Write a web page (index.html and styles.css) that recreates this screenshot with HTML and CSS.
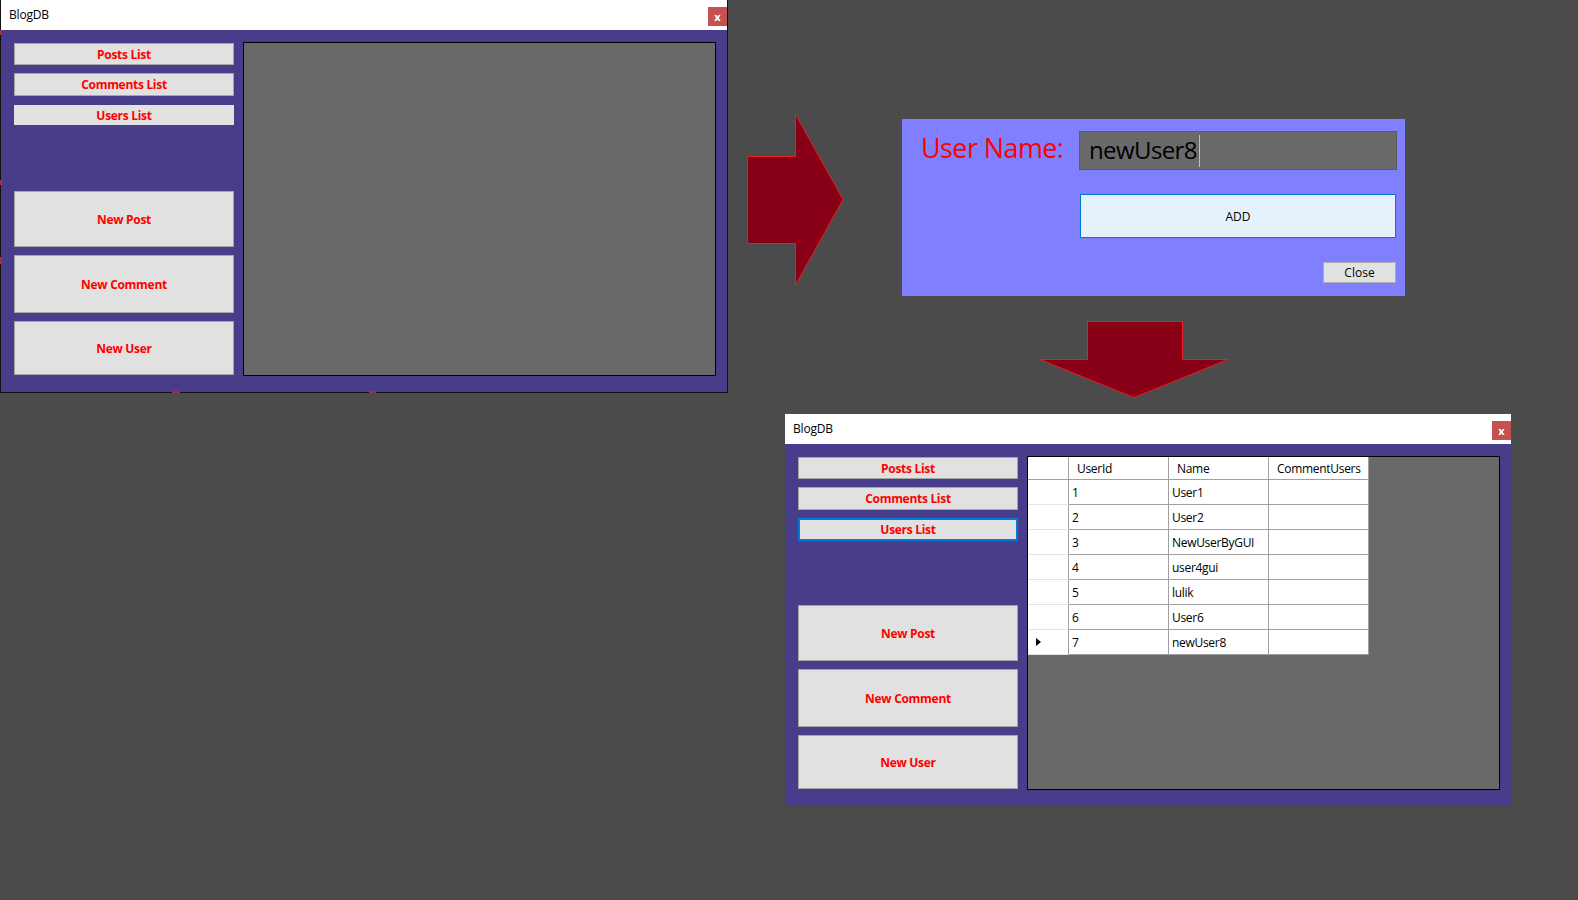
FILE: index.html
```html
<!DOCTYPE html>
<html lang="en">
<head>
    <meta charset="UTF-8">
    <meta name="viewport" content="width=device-width, initial-scale=1.0">
    <title>BlogDB</title>
    <link rel="stylesheet" href="styles.css">
</head>
<body>
<div class="desktop">

    <!-- main form, empty view -->
    <section class="window window-first">
        <header class="titlebar">
            <span class="title">BlogDB</span>
            <button class="close" type="button">x</button>
        </header>
        <div class="window-body">
            <nav class="menu">
                <button class="btn btn-list" type="button">Posts List</button>
                <button class="btn btn-list" type="button">Comments List</button>
                <button class="btn btn-list btn-flat" type="button">Users List</button>
                <button class="btn btn-post" type="button">New Post</button>
                <button class="btn btn-comment" type="button">New Comment</button>
                <button class="btn btn-user" type="button">New User</button>
            </nav>
            <div class="view"></div>
        </div>
        <span class="grip grip-l1"></span>
        <span class="grip grip-l2"></span>
        <span class="grip grip-l3"></span>
        <span class="grip grip-b1"></span>
        <span class="grip grip-b2"></span>
    </section>

    <svg class="arrow arrow-right" width="99" height="174" viewBox="0 0 99 174">
        <polygon points="1.5,43.5 49.5,43.5 49.5,1.5 97,86.5 49.5,172 49.5,130.5 1.5,130.5"/>
    </svg>

    <!-- add user dialog -->
    <form class="dialog">
        <label class="dialog-label" for="userName">User Name:</label>
        <div class="textbox" id="userName">newUser8<span class="caret"></span></div>
        <button class="btn-add" type="button">ADD</button>
        <button class="btn-close" type="button">Close</button>
    </form>

    <svg class="arrow arrow-down" width="191" height="79" viewBox="0 0 191 79">
        <polygon points="48.5,1.5 143.5,1.5 143.5,39.5 189,39.5 95,77.5 1,39.5 48.5,39.5"/>
    </svg>

    <!-- main form, users list loaded -->
    <section class="window window-second">
        <header class="titlebar">
            <span class="title">BlogDB</span>
            <button class="close" type="button">x</button>
        </header>
        <div class="window-body">
            <nav class="menu">
                <button class="btn btn-list" type="button">Posts List</button>
                <button class="btn btn-list" type="button">Comments List</button>
                <button class="btn btn-list btn-focus" type="button">Users List</button>
                <button class="btn btn-post" type="button">New Post</button>
                <button class="btn btn-comment" type="button">New Comment</button>
                <button class="btn btn-user" type="button">New User</button>
            </nav>
            <div class="view">
                <table class="grid">
                    <colgroup>
                        <col class="col-head">
                        <col class="col-data">
                        <col class="col-data">
                        <col class="col-data">
                    </colgroup>
                    <thead>
                        <tr>
                            <th class="row-head"></th>
                            <th>UserId</th>
                            <th>Name</th>
                            <th>CommentUsers</th>
                        </tr>
                    </thead>
                    <tbody>
                        <tr><td class="row-head"></td><td>1</td><td>User1</td><td></td></tr>
                        <tr><td class="row-head"></td><td>2</td><td>User2</td><td></td></tr>
                        <tr><td class="row-head"></td><td>3</td><td>NewUserByGUI</td><td></td></tr>
                        <tr><td class="row-head"></td><td>4</td><td>user4gui</td><td></td></tr>
                        <tr><td class="row-head"></td><td>5</td><td>lulik</td><td></td></tr>
                        <tr><td class="row-head"></td><td>6</td><td>User6</td><td></td></tr>
                        <tr><td class="row-head"><span class="pointer"></span></td><td>7</td><td>newUser8</td><td></td></tr>
                    </tbody>
                </table>
            </div>
        </div>
    </section>

</div>
</body>
</html>
```

FILE: styles.css
```css
body {
    margin: 0;
    background: #4b4b4b;
    font-family: "Open Sans", "Liberation Sans", sans-serif;
    color: #000;
}
.desktop {
    position: relative;
    width: 1578px;
    height: 900px;
    overflow: hidden;
}
button {
    font-family: inherit;
    padding: 0;
    cursor: pointer;
}

/* windows */
.window {
    position: absolute;
    width: 726px;
    background: #483d8b;
}
.window-first {
    left: 0;
    top: 0;
    border: 1px solid #111;
    border-top: 0;
}
.window-second {
    left: 785px;
    top: 414px;
}
.titlebar {
    height: 30px;
    background: #fff;
    display: flex;
    justify-content: space-between;
    padding-left: 8px;
}
.title {
    font-size: 12px;
    line-height: 30px;
    letter-spacing: -0.2px;
}
.close {
    width: 19px;
    height: 19px;
    margin-top: 7px;
    background: #c75050;
    border: none;
    color: #fff;
    font-size: 11px;
    font-weight: bold;
    line-height: 17px;
}
.window-body {
    height: 362px;
    box-sizing: border-box;
    display: flex;
    gap: 9px;
    padding: 12px 11px 0 13px;
}
.menu {
    width: 220px;
    display: flex;
    flex-direction: column;
    padding-top: 1px;
}
.btn {
    background: #e1e1e1;
    border: 1px solid #a5a5a5;
    color: #f00;
    font-size: 12px;
    font-weight: bold;
    letter-spacing: -0.3px;
}
.btn-list {
    height: 23px;
    margin-top: 8px;
}
.btn-list:first-child {
    height: 22px;
    margin-top: 0;
}
.btn-flat {
    border-color: #e1e1e1;
    height: 20px;
    margin-top: 9px;
    margin-bottom: 2px;
}
.btn-focus {
    border: 2px solid #0078d7;
}
.btn-post {
    height: 56px;
    margin-top: 64px;
}
.btn-comment {
    height: 58px;
    margin-top: 8px;
}
.btn-user {
    height: 54px;
    margin-top: 8px;
}
.view {
    width: 473px;
    height: 334px;
    box-sizing: border-box;
    background: #696969;
    border: 1px solid #000;
}

/* small red grips sitting on the frame edge */
.grip {
    position: absolute;
    background: #b8262e;
}
.grip-l1,
.grip-l2,
.grip-l3 {
    left: -1px;
    width: 2px;
}
.grip-l1 {
    top: 30px;
    height: 5px;
}
.grip-l2 {
    top: 180px;
    height: 5px;
}
.grip-l3 {
    top: 257px;
    height: 7px;
}
.grip-b1,
.grip-b2 {
    bottom: -1px;
    height: 2px;
}
.grip-b1 {
    left: 171px;
    width: 8px;
}
.grip-b2 {
    left: 368px;
    width: 7px;
}

/* users grid */
.grid {
    border-collapse: separate;
    border-spacing: 0;
    table-layout: fixed;
    width: 341px;
    background: #fff;
    font-size: 12px;
    letter-spacing: -0.3px;
}
.col-head {
    width: 41px;
}
.col-data {
    width: 100px;
}
.grid th,
.grid td {
    box-sizing: border-box;
    height: 25px;
    padding: 0 0 0 3px;
    border-right: 1px solid #a0a0a0;
    border-bottom: 1px solid #a0a0a0;
    text-align: left;
    font-weight: normal;
    white-space: nowrap;
}
.grid th {
    height: 23px;
    padding-left: 8px;
}
.grid td.row-head {
    border-bottom-color: #e3e3e3;
    padding-left: 8px;
}
.pointer {
    display: block;
    width: 0;
    height: 0;
    border-left: 5px solid #000;
    border-top: 4px solid transparent;
    border-bottom: 4px solid transparent;
}

/* drawn arrows */
.arrow {
    position: absolute;
    fill: #880015;
    stroke: #ed1c24;
    stroke-width: 1;
}
.arrow-right {
    left: 746px;
    top: 113px;
}
.arrow-down {
    left: 1039px;
    top: 320px;
}

/* add user dialog */
.dialog {
    position: absolute;
    left: 902px;
    top: 119px;
    width: 503px;
    height: 177px;
    box-sizing: border-box;
    margin: 0;
    padding: 12px 8px 0 19px;
    background: #8080ff;
    display: grid;
    grid-template-columns: 158px 318px;
    grid-template-rows: 39px 44px 21px;
    row-gap: 24px;
    align-content: start;
}
.dialog-label {
    color: #f00;
    font-size: 27px;
    line-height: 34px;
    letter-spacing: -0.6px;
}
.textbox {
    box-sizing: border-box;
    background: #696969;
    border: 1px solid #5c5c5c;
    padding-left: 9px;
    font-size: 24px;
    line-height: 36px;
    letter-spacing: -0.6px;
    color: #000;
}
.caret {
    display: inline-block;
    width: 1px;
    height: 32px;
    margin-left: 2px;
    vertical-align: -8px;
    background: #c0c0c0;
}
.btn-add {
    grid-column: 2;
    width: 316px;
    margin-left: 1px;
    background: #e5f1fb;
    border: 1px solid #0078d7;
    font-size: 12px;
    color: #000;
}
.btn-close {
    grid-column: 2;
    justify-self: end;
    width: 73px;
    margin-right: 1px;
    background: #e1e1e1;
    border: 1px solid #adadad;
    font-size: 12px;
    color: #000;
}
```
